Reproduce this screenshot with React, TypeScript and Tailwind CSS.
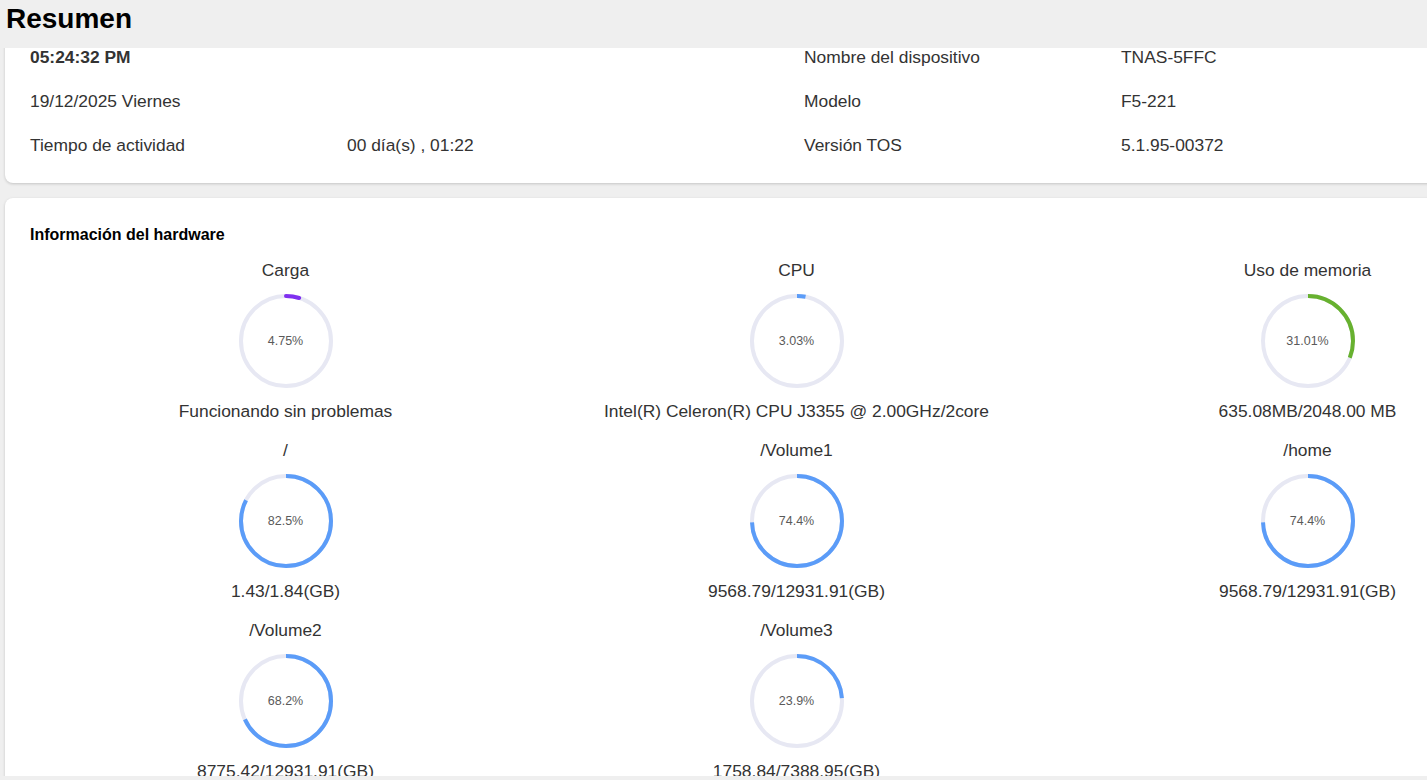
import React from 'react';

type Gauge = { title: string; pct: number; label: string; caption: string; color: string; round?: boolean };

const gauges: Gauge[] = [
  { title: 'Carga', pct: 4.75, label: '4.75%', caption: 'Funcionando sin problemas', color: '#7f30f0', round: true },
  { title: 'CPU', pct: 3.03, label: '3.03%', caption: 'Intel(R) Celeron(R) CPU J3355 @ 2.00GHz/2core', color: '#5b9cf8' },
  { title: 'Uso de memoria', pct: 31.01, label: '31.01%', caption: '635.08MB/2048.00 MB', color: '#67b12f' },
  { title: '/', pct: 82.5, label: '82.5%', caption: '1.43/1.84(GB)', color: '#5b9cf8' },
  { title: '/Volume1', pct: 74.4, label: '74.4%', caption: '9568.79/12931.91(GB)', color: '#5b9cf8' },
  { title: '/home', pct: 74.4, label: '74.4%', caption: '9568.79/12931.91(GB)', color: '#5b9cf8' },
  { title: '/Volume2', pct: 68.2, label: '68.2%', caption: '8775.42/12931.91(GB)', color: '#5b9cf8' },
  { title: '/Volume3', pct: 23.9, label: '23.9%', caption: '1758.84/7388.95(GB)', color: '#5b9cf8' },
];

function Ring({ pct, label, color, round }: { pct: number; label: string; color: string; round?: boolean }) {
  const r = 45;
  const c = 2 * Math.PI * r;
  return (
    <div className="relative w-[94px] h-[94px]">
      <svg width="94" height="94" viewBox="0 0 94 94" className="-rotate-90">
        <circle cx="47" cy="47" r={r} fill="none" stroke="#e7e8f3" strokeWidth="4" />
        <circle
          cx="47"
          cy="47"
          r={r}
          fill="none"
          stroke={color}
          strokeWidth="4"
          strokeLinecap={round ? 'round' : 'butt'}
          strokeDasharray={`${(c * pct) / 100} ${c}`}
        />
      </svg>
      <div className="absolute inset-0 flex items-center justify-center text-[12.5px] text-[#5a5a5a]">{label}</div>
    </div>
  );
}

function InfoRow({ label, value, bold }: { label: string; value: string; bold?: boolean }) {
  return (
    <div className="flex h-[44px] items-center">
      <div className={`w-[317px] ${bold ? 'font-bold' : ''}`}>{label}</div>
      <div>{value}</div>
    </div>
  );
}

export default function App() {
  return (
    <div
      className="h-[780px] w-[1427px] overflow-hidden bg-[#efefef] text-[17.4px] text-[#333]"
      style={{ fontFamily: '"Liberation Sans", Arial, sans-serif' }}
    >
      {/* title bar */}
      <div className="flex h-[48px] items-center pl-[6px]">
        <h1 className="text-[28px] font-bold leading-none text-black -mt-[10px]">Resumen</h1>
      </div>

      {/* scrolled content */}
      <div className="h-[728px] overflow-hidden pl-[5px]">
        <div className="-mt-[26px] w-[1600px]">
          <div className="rounded-lg bg-white pl-[25px] pt-[13px] pb-[16px] shadow-[0_1px_3px_rgba(0,0,0,0.18)]">
            <div className="flex">
              <div className="w-[774px]">
                <InfoRow label="05:24:32 PM" value="" bold />
                <InfoRow label="19/12/2025 Viernes" value="" />
                <InfoRow label="Tiempo de actividad" value="00 día(s) , 01:22" />
              </div>
              <div className="w-[774px]">
                <InfoRow label="Nombre del dispositivo" value="TNAS-5FFC" />
                <InfoRow label="Modelo" value="F5-221" />
                <InfoRow label="Versión TOS" value="5.1.95-00372" />
              </div>
            </div>
          </div>

          <div className="mt-[15px] rounded-lg bg-white pl-[25px] pt-[27px] pb-[30px] shadow-[0_1px_3px_rgba(0,0,0,0.18)]">
            <h2 className="text-[16px] font-bold leading-[20px] text-black">Información del hardware</h2>
            <div className="mt-[15px] grid grid-cols-[511px_511px_511px] gap-y-[19px]">
              {gauges.map((g, i) => (
                <div key={i} className="flex flex-col items-center">
                  <div className="h-[20px] leading-[20px]">{g.title}</div>
                  <div className="mt-[14px]">
                    <Ring pct={g.pct} label={g.label} color={g.color} round={g.round} />
                  </div>
                  <div className="mt-[13px] h-[20px] leading-[20px] whitespace-nowrap">{g.caption}</div>
                </div>
              ))}
            </div>
          </div>
        </div>
      </div>
    </div>
  );
}
